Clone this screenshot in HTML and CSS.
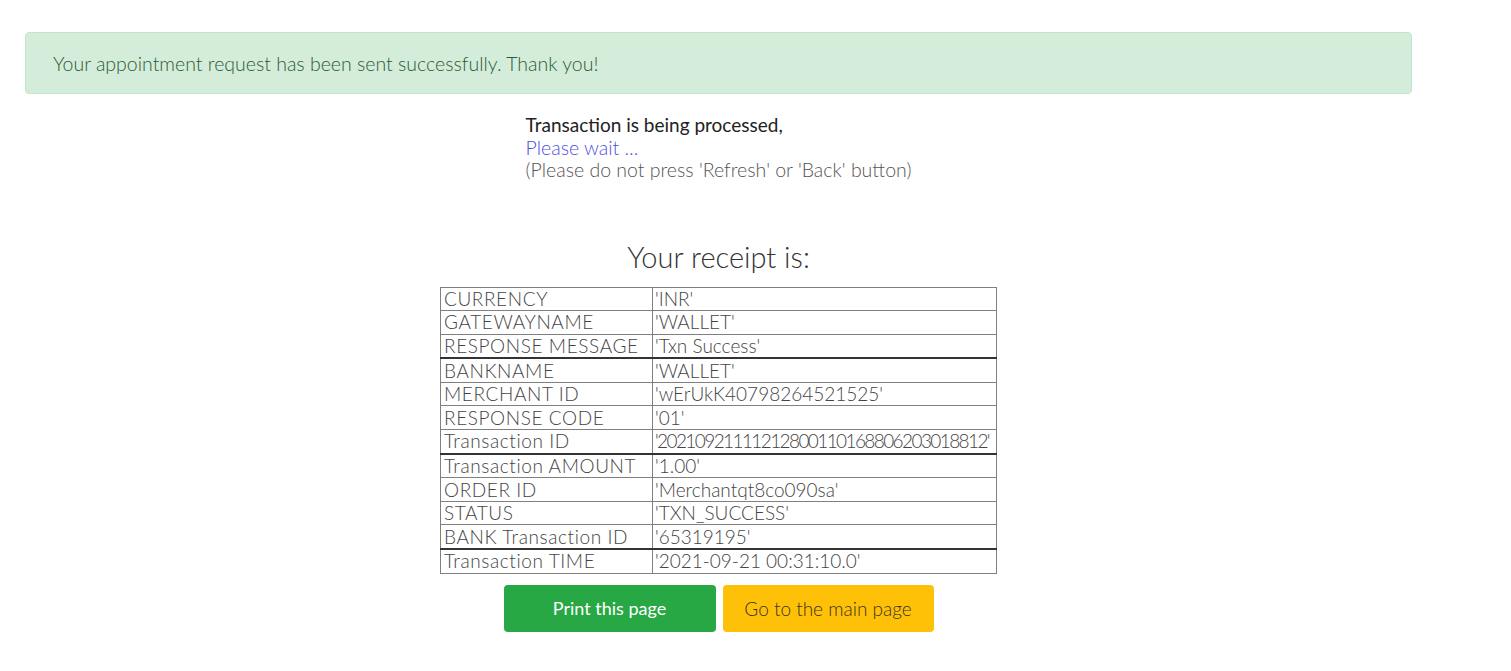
FILE: index.html
```html
<!DOCTYPE html>
<html lang="en">
<head>
<meta charset="utf-8">
<title>Receipt</title>
<link rel="stylesheet" href="styles.css">
</head>
<body>
<div class="page">
  <div class="alert">Your appointment request has been sent successfully. Thank you!</div>
  <div class="status-wrap">
    <div class="status">
      <div class="status-title">Transaction is being processed,</div>
      <div class="status-wait">Please wait ...</div>
      <div class="status-note">(Please do not press 'Refresh' or 'Back' button)</div>
    </div>
  </div>
  <h2 class="receipt-title">Your receipt is:</h2>
  <table class="receipt">
    <colgroup><col class="col-k"><col class="col-v"></colgroup>
    <tr><td class="k">CURRENCY</td><td class="v">'INR'</td></tr>
    <tr><td class="k">GATEWAYNAME</td><td class="v">'WALLET'</td></tr>
    <tr><td class="k">RESPONSE MESSAGE</td><td class="v">'Txn Success'</td></tr>
    <tr class="dark"><td class="k">BANKNAME</td><td class="v">'WALLET'</td></tr>
    <tr><td class="k">MERCHANT ID</td><td class="v">'wErUkK40798264521525'</td></tr>
    <tr><td class="k">RESPONSE CODE</td><td class="v">'01'</td></tr>
    <tr><td class="k">Transaction ID</td><td class="v v-long">'20210921111212800110168806203018812'</td></tr>
    <tr class="dark"><td class="k">Transaction AMOUNT</td><td class="v">'1.00'</td></tr>
    <tr><td class="k">ORDER ID</td><td class="v">'Merchantqt8co090sa'</td></tr>
    <tr><td class="k">STATUS</td><td class="v">'TXN_SUCCESS'</td></tr>
    <tr><td class="k">BANK Transaction ID</td><td class="v">'65319195'</td></tr>
    <tr class="dark"><td class="k">Transaction TIME</td><td class="v">'2021-09-21 00:31:10.0'</td></tr>
  </table>
  <div class="actions">
    <button class="btn btn-green" type="button">Print this page</button>
    <button class="btn btn-yellow" type="button">Go to the main page</button>
  </div>
</div>
</body>
</html>
```

FILE: styles.css
```css
html, body {
  margin: 0;
  padding: 0;
  background: #ffffff;
}
body {
  font-family: "Lato", "Liberation Sans", sans-serif;
  font-weight: 300;
  color: #555555;
}
.page {
  width: 1387px;
  margin-left: 25px;
  padding-top: 32px;
}
.alert {
  box-sizing: border-box;
  height: 62px;
  background: #d4edda;
  border: 1px solid #c3e6cb;
  border-radius: 4px;
  color: #2d5a37;
  font-size: 19.5px;
  padding: 0 27px;
  display: flex;
  align-items: center;
}
.status-wrap {
  display: flex;
  justify-content: center;
  margin-top: 20px;
}
.status {
  font-size: 19.5px;
  line-height: 22.5px;
}
.status-title {
  color: #222222;
  font-weight: 400;
  font-size: 19px;
}
.status-wait {
  color: #5050e0;
}
.status-note {
  color: #555555;
}
.receipt-title {
  margin: 57px 0 0;
  text-align: center;
  font-size: 29px;
  font-weight: 300;
  line-height: 36px;
  color: #333333;
}
.receipt {
  margin: 12px auto 0;
  border-collapse: collapse;
  table-layout: fixed;
  width: 556px;
  font-size: 19px;
  color: #444444;
}
.col-k {
  width: 212px;
}
.col-v {
  width: 344px;
}
.receipt td {
  border: 1px solid #808080;
  height: 22.6px;
  padding: 0 2px;
  line-height: 22px;
  white-space: nowrap;
  overflow: hidden;
}
.receipt td.k {
  padding-left: 3px;
  letter-spacing: 0.6px;
}
.receipt td.v-long {
  letter-spacing: -1.6px;
}
.receipt tr.dark td {
  border-top: 2px solid #333333;
}
.actions {
  display: flex;
  justify-content: center;
  gap: 7px;
  margin-top: 11px;
}
.btn {
  font-family: inherit;
  font-weight: 300;
  font-size: 18px;
  height: 47px;
  border: none;
  border-radius: 4px;
  cursor: pointer;
}
.btn-green {
  width: 212px;
  background: #28a745;
  color: #ffffff;
  font-weight: 400;
}
.btn-yellow {
  width: 211px;
  background: #ffc107;
  color: #3b3420;
  font-size: 19px;
}
```
